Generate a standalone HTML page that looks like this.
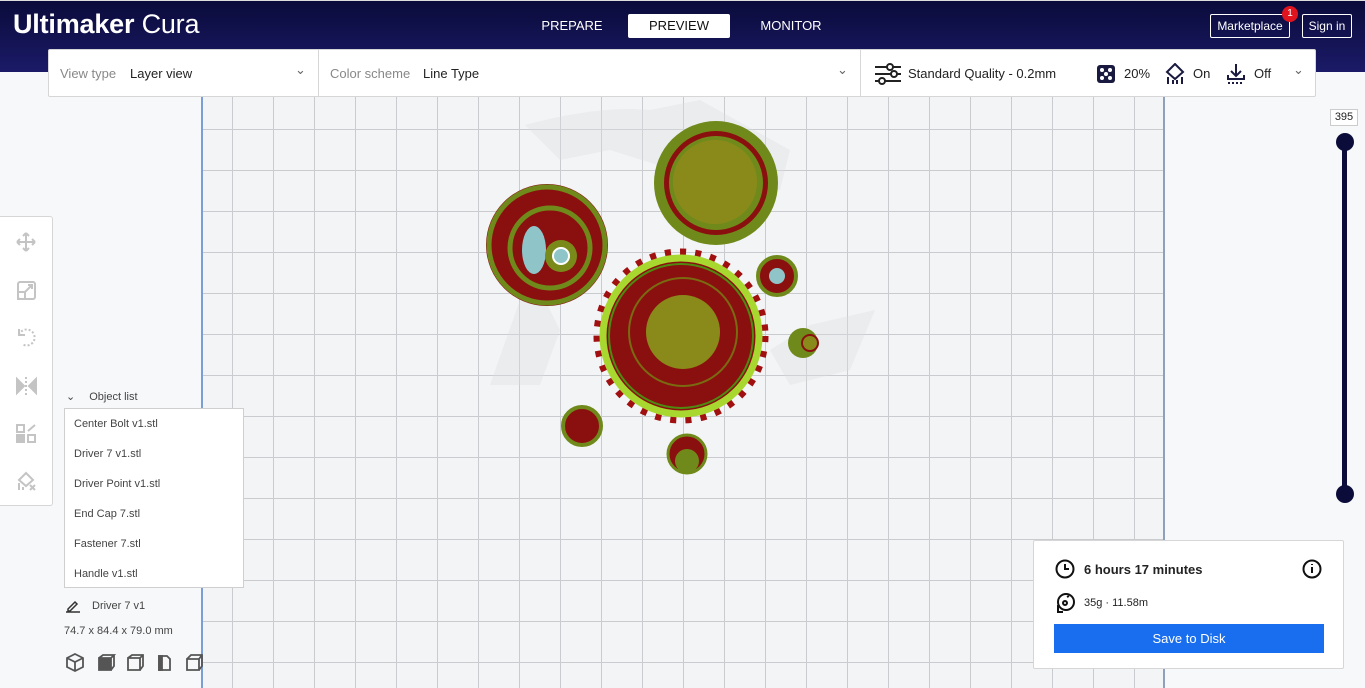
<!DOCTYPE html>
<html><head><meta charset="utf-8"><style>
*{box-sizing:border-box;margin:0;padding:0}
body{width:1365px;height:688px;overflow:hidden;position:relative;background:#f7f8fa;font-family:"Liberation Sans",sans-serif;color:#222}
.hdr{position:absolute;left:0;top:0;width:1365px;height:72px;background:linear-gradient(180deg,#0a0b3a,#1b1a68);border-top:1px solid #ddd}
.logo{position:absolute;left:13px;top:8px;color:#fff;font-size:27px;letter-spacing:-0.2px}
.logo b{font-weight:bold}
.tab{position:absolute;top:13px;height:24px;line-height:24px;color:#fff;font-size:13px;text-align:center}
.btn{position:absolute;top:13px;height:24px;border:1px solid #fff;border-radius:2px;color:#fff;font-size:12px;line-height:22px;text-align:center}
.plate{position:absolute;left:201px;top:97px;width:964px;height:591px;background-color:#f3f4f6;
background-image:linear-gradient(#cacbce 1px,transparent 1px),linear-gradient(90deg,#cacbce 1px,transparent 1px);
background-size:41px 41px;background-position:0 32px,29px 0;border-left:2px solid #7c9ed8;border-right:2px solid #8fa0bc}
.bar{position:absolute;left:48px;top:49px;width:1268px;height:48px;background:#fff;border:1px solid #d6d6d6;border-radius:2px;font-size:13px}
.bar span{position:absolute;top:16px}
.g{color:#888}
.sep{position:absolute;top:0;width:1px;height:46px;background:#d6d6d6}
.tools{position:absolute;left:0;top:216px;width:53px;height:290px;background:#fff;border:1px solid #d6d6d6;border-left:none;border-radius:0 3px 3px 0}
.ol{position:absolute;left:64px;top:408px;width:180px;height:180px;background:#fff;border:1px solid #cfcfcf;font-size:11px;color:#444}
.ol div{height:30px;line-height:30px;padding-left:9px}
.card{position:absolute;left:1033px;top:540px;width:311px;height:129px;background:#fff;border:1px solid #d6d6d6;border-radius:2px}
</style></head><body>
<div class="hdr">
 <div class="logo"><b>Ultimaker</b> Cura</div>
 <div class="tab" style="left:530px;width:84px">PREPARE</div>
 <div class="tab" style="left:628px;width:102px;background:#fff;color:#111;border-radius:2px">PREVIEW</div>
 <div class="tab" style="left:748px;width:86px">MONITOR</div>
 <div class="btn" style="left:1210px;width:80px">Marketplace</div>
 <div style="position:absolute;left:1282px;top:5px;width:16px;height:16px;border-radius:50%;background:#e0141e;color:#fff;font-size:10px;text-align:center;line-height:16px">1</div>
 <div class="btn" style="left:1302px;width:50px">Sign in</div>
</div>
<div class="plate"></div>
<svg style="position:absolute;left:0;top:0" width="1365" height="688">
 <g opacity="0.35" fill="#dcdde0"><path d="M525 125 Q600 105 650 110 L700 100 L790 150 L780 190 L740 170 L690 175 L610 150 L560 160Z"/><path d="M490 385 L520 300 L540 290 L560 330 L540 385Z"/><path d="M770 350 L810 325 L875 310 L850 370 L790 385Z"/></g>
 <g>
  <circle cx="547" cy="245" r="61" fill="#8a1010"/><circle cx="547" cy="245" r="58" fill="none" stroke="#6f8a1a" stroke-width="5"/>
  <circle cx="550" cy="248" r="40" fill="none" stroke="#6f8a1a" stroke-width="5"/>
  <ellipse cx="534" cy="250" rx="12" ry="24" fill="#8fc4c8"/>
  <circle cx="561" cy="256" r="16" fill="#7a8a1a"/><circle cx="561" cy="256" r="8" fill="#8fc4c8" stroke="#fff" stroke-width="2"/>
  <circle cx="716" cy="183" r="62" fill="#6f8a1a"/><circle cx="716" cy="183" r="52" fill="#8a1010"/><circle cx="716" cy="183" r="47" fill="#6f8a1a"/><circle cx="715" cy="182" r="42" fill="#8a8a1a"/>
  <circle cx="681" cy="336" r="83" fill="none" stroke="#a01010" stroke-width="9" stroke-dasharray="6 9"/>
  <circle cx="681" cy="336" r="78" fill="#8a1010" stroke="#a8d830" stroke-width="7"/>
  <circle cx="681" cy="336" r="72" fill="none" stroke="#4f8a10" stroke-width="2"/>
  <circle cx="683" cy="332" r="54" fill="none" stroke="#7a6a10" stroke-width="2"/>
  <circle cx="683" cy="332" r="37" fill="#8a8a1a"/>
  <circle cx="777" cy="276" r="19" fill="#8a1010" stroke="#6f8a1a" stroke-width="4"/><circle cx="777" cy="276" r="8" fill="#8fc4c8"/>
  <circle cx="803" cy="343" r="15" fill="#6f8a1a"/><circle cx="810" cy="343" r="8" fill="#8a8a1a" stroke="#8a1010" stroke-width="2"/>
  <circle cx="582" cy="426" r="19" fill="#8a1010" stroke="#6f8a1a" stroke-width="4"/>
  <circle cx="687" cy="454" r="19" fill="#8a1010" stroke="#6f8a1a" stroke-width="3"/><circle cx="687" cy="461" r="12" fill="#6f8a1a"/>
 </g>
</svg>
<div class="bar">
 <span class="g" style="left:11px">View type</span><span style="left:81px">Layer view</span>
 <span style="left:246px;top:12px;color:#666">⌄</span>
 <div class="sep" style="left:269px"></div>
 <span class="g" style="left:281px">Color scheme</span><span style="left:374px">Line Type</span>
 <span style="left:788px;top:12px;color:#666">⌄</span>
 <div class="sep" style="left:811px"></div>
 <svg style="position:absolute;left:826px;top:13px" width="26" height="22" fill="none" stroke="#222" stroke-width="2"><path d="M0 4h26M0 11h26M0 18h26"/><circle cx="15" cy="4" r="3" fill="#fff"/><circle cx="19" cy="11" r="3" fill="#fff"/><circle cx="7" cy="18" r="3" fill="#fff"/></svg>
 <span style="left:859px">Standard Quality - 0.2mm</span>
 <svg style="position:absolute;left:1048px;top:15px" width="18" height="18"><rect width="18" height="18" rx="3" fill="#1a1a40"/><g fill="#fff"><circle cx="5" cy="5" r="2"/><circle cx="13" cy="5" r="2"/><circle cx="9" cy="9" r="2"/><circle cx="5" cy="13" r="2"/><circle cx="13" cy="13" r="2"/></g></svg>
 <span style="left:1075px">20%</span>
 <svg style="position:absolute;left:1116px;top:13px" width="20" height="22" fill="none" stroke="#1a1a40" stroke-width="2"><path d="M10 1L18 9L10 16L2 9Z"/><path d="M3 14v7M8 17v4M12 17v4M17 14v7"/></svg>
 <span style="left:1144px">On</span>
 <svg style="position:absolute;left:1177px;top:13px" width="20" height="22" fill="none" stroke="#1a1a40" stroke-width="2"><path d="M10 1v11M5 8l5 5 5-5M2 12v4h16v-4"/><path d="M2 20h16" stroke-dasharray="2 2"/></svg>
 <span style="left:1205px">Off</span>
 <span style="left:1244px;top:12px;color:#666">⌄</span>
</div>
<div class="tools">
 <svg width="53" height="290" fill="none" stroke="#c4c4c4" stroke-width="2">
  <path d="M26 16v18M17 25h18M26 16l-3 3M26 16l3 3M26 34l-3-3M26 34l3-3M17 25l3-3M17 25l3 3M35 25l-3-3M35 25l-3 3"/>
  <rect x="18" y="65" width="17" height="17" rx="2"/><rect x="18" y="75" width="7" height="7"/><path d="M24 76l8-8M28 68h4v4"/>
  <path d="M19 118a8 8 0 1 1 3 9" stroke-dasharray="2 2"/><path d="M19 112v6h6"/>
  <path d="M17 162l7 7-7 7Z M36 162l-7 7 7 7Z" fill="#c4c4c4"/><path d="M26 160v20" stroke-dasharray="2 2"/>
  <rect x="17" y="208" width="7" height="7"/><rect x="17" y="218" width="7" height="7" fill="#c4c4c4"/><rect x="28" y="218" width="7" height="7"/><path d="M28 214l7-6"/>
  <path d="M26 256l7 7-7 6-7-6Z"/><path d="M19 266v7M23 270v3M30 268l5 5M35 268l-5 5"/>
 </svg>
</div>
<div style="position:absolute;left:66px;top:390px;font-size:11px;color:#444">⌄<span style="margin-left:14px">Object list</span></div>
<div class="ol"><div>Center Bolt v1.stl</div><div>Driver 7 v1.stl</div><div>Driver Point v1.stl</div><div>End Cap 7.stl</div><div>Fastener 7.stl</div><div>Handle v1.stl</div></div>
<svg style="position:absolute;left:66px;top:599px" width="14" height="14" stroke="#333" stroke-width="1.5" fill="none"><path d="M2 10l7-7 2 2-7 7H2z"/><path d="M0 13h14"/></svg>
<div style="position:absolute;left:92px;top:600px;font-size:11px;color:#444">Driver 7 v1</div>
<div style="position:absolute;left:64px;top:625px;font-size:11px;color:#444">74.7 x 84.4 x 79.0 mm</div>
<svg style="position:absolute;left:64px;top:652px" width="146" height="22" fill="none" stroke="#555" stroke-width="1.8">
 <path d="M11 2l8 4v9l-8 4-8-4V6z M3 6l8 4 8-4 M11 10v9"/>
 <path d="M35 6h12v12H35z" fill="#555"/><path d="M35 6l4-3h11l-3 3M50 3v11l-3 4"/>
 <path d="M64 6h12v12H64z M64 6l4-3h11v11l-3 4" /><path d="M76 6l3-3"/>
 <path d="M95 4h8l3 3v11H95z"/><rect x="95" y="4" width="3" height="14" fill="#555"/>
 <path d="M123 7h12v11h-12z M123 7l4-4h11v11l-3 4 M135 7l3-4"/>
</svg>
<div style="position:absolute;left:1330px;top:109px;width:28px;height:17px;background:#fff;border:1px solid #ccc;font-size:11px;text-align:center;line-height:15px">395</div>
<div style="position:absolute;left:1342px;top:140px;width:5px;height:354px;background:#0c0c3a"></div>
<div style="position:absolute;left:1336px;top:133px;width:18px;height:18px;border-radius:50%;background:#0c0c3a"></div>
<div style="position:absolute;left:1336px;top:485px;width:18px;height:18px;border-radius:50%;background:#0c0c3a"></div>
<div class="card">
 <svg style="position:absolute;left:21px;top:18px" width="20" height="20" fill="none" stroke="#111" stroke-width="2"><circle cx="10" cy="10" r="8.5"/><path d="M10 5v5h4"/></svg>
 <div style="position:absolute;left:50px;top:21px;font-size:13px;font-weight:bold">6 hours 17 minutes</div>
 <svg style="position:absolute;left:268px;top:18px" width="20" height="20" fill="none" stroke="#111" stroke-width="2"><circle cx="10" cy="10" r="8.5"/><path d="M10 8v6M10 5v1"/></svg>
 <svg style="position:absolute;left:21px;top:51px" width="22" height="22" fill="none" stroke="#111" stroke-width="2"><circle cx="11" cy="10" r="8"/><circle cx="10" cy="11" r="2"/><path d="M12 5l2-1M3 13v7h5"/></svg>
 <div style="position:absolute;left:50px;top:56px;font-size:11px">35g · 11.58m</div>
 <div style="position:absolute;left:20px;top:83px;width:270px;height:29px;background:#196ef0;color:#fff;font-size:13px;text-align:center;line-height:29px">Save to Disk</div>
</div>
</body></html>
